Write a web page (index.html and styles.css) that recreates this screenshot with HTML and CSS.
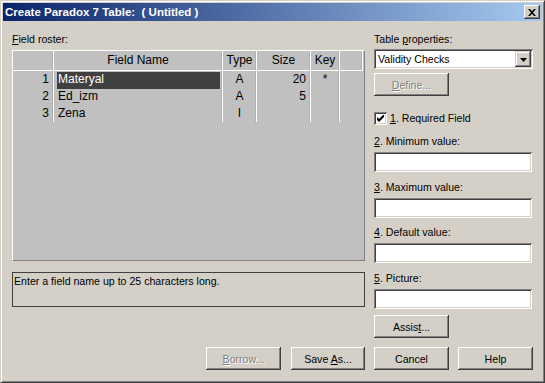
FILE: index.html
```html
<!DOCTYPE html>
<html>
<head>
<meta charset="utf-8">
<link rel="stylesheet" href="styles.css">
</head>
<body>
<div class="window">
  <div class="titlebar">
    <span class="title">Create Paradox 7 Table:  ( Untitled )</span>
    <div class="close"><svg width="8" height="7" viewBox="0 0 8 7"><path d="M0 0h2l2 2.2L6 0h2L5 3.5 8 7H6L4 4.8 2 7H0l3-3.5z" fill="#000"/></svg></div>
  </div>
  <div class="content">
    <div class="left">
      <div class="label"><u>F</u>ield roster:</div>
      <div class="roster">
        <div class="head">
          <div class="hc"></div>
          <div class="hc">Field Name</div>
          <div class="hc">Type</div>
          <div class="hc">Size</div>
          <div class="hc">Key</div>
          <div class="hc"></div>
        </div>
        <div class="row">
          <div class="c num">1</div>
          <div class="c name"><span class="sel">Materyal</span></div>
          <div class="c mid">A</div>
          <div class="c num">20</div>
          <div class="c mid">*</div>
        </div>
        <div class="row">
          <div class="c num">2</div>
          <div class="c name"><span class="txt">Ed_izm</span></div>
          <div class="c mid">A</div>
          <div class="c num">5</div>
          <div class="c mid"></div>
        </div>
        <div class="row">
          <div class="c num">3</div>
          <div class="c name"><span class="txt">Zena</span></div>
          <div class="c mid">I</div>
          <div class="c num"></div>
          <div class="c mid"></div>
        </div>
      </div>
      <div class="status">Enter a field name up to 25 characters long.</div>
    </div>
    <div class="right">
      <div class="label">Table <u>p</u>roperties:</div>
      <div class="select">
        <span class="sel-text">Validity Checks</span>
        <span class="arrow"><svg width="7" height="4" viewBox="0 0 7 4"><path d="M0 0h7L3.5 4z" fill="#000"/></svg></span>
      </div>
      <button class="btn define" disabled><u>D</u>efine...</button>
      <div class="check-row">
        <span class="checkbox"><svg width="7" height="7" viewBox="0 0 7 7"><path d="M0 2l2 2 5-5v3L2 7 0 5z" fill="#000"/></svg></span>
        <span><u>1</u>. Required Field</span>
      </div>
      <div class="field f2"><div class="label"><u>2</u>. Minimum value:</div><input class="input" type="text"></div>
      <div class="field f3"><div class="label"><u>3</u>. Maximum value:</div><input class="input" type="text"></div>
      <div class="field f4"><div class="label"><u>4</u>. Default value:</div><input class="input" type="text"></div>
      <div class="field f5"><div class="label"><u>5</u>. Picture:</div><input class="input" type="text"></div>
      <button class="btn assist">Assis<u>t</u>...</button>
    </div>
    <div class="btns-left">
      <button class="btn" disabled><u>B</u>orrow...</button>
      <button class="btn">Save <u>A</u>s...</button>
    </div>
    <div class="btns-right">
      <button class="btn">Cancel</button>
      <button class="btn">Help</button>
    </div>
  </div>
</div>
</body>
</html>
```

FILE: styles.css
```css
* { box-sizing: border-box; }
body {
  margin: 0;
  font-family: "Liberation Sans", Arial, sans-serif;
  font-size: 10.6px;
  color: #000;
  background: #d4d0c8;
}
.window {
  width: 545px;
  height: 383px;
  background: #d4d0c8;
  border: 1px solid;
  border-color: #d4d0c8 #404040 #404040 #d4d0c8;
  box-shadow: inset 1px 1px #fff, inset -1px -1px #808080;
  padding: 2px;
  display: flex;
  flex-direction: column;
}
.titlebar {
  height: 18px;
  background: linear-gradient(to right, #0a246a, #a6caf0);
  display: flex;
  align-items: center;
  justify-content: space-between;
  padding-left: 2px;
  padding-right: 2px;
}
.title {
  color: #fff;
  font-weight: bold;
  font-size: 11.5px;
  white-space: pre;
  line-height: 18px;
}
.close {
  width: 16px;
  height: 14px;
  background: #d4d0c8;
  box-shadow: inset -1px -1px #404040, inset 1px 1px #fff, inset -2px -2px #808080;
  display: flex;
  align-items: center;
  justify-content: center;
  padding-right: 1px;
}
.close svg { display: block; }
.content {
  padding: 12px 9px 0 9px;
  display: grid;
  grid-template-columns: 353px 159px;
  column-gap: 9px;
  row-gap: 9px;
}
.label {
  line-height: 13px;
  height: 13px;
  white-space: nowrap;
}
.left { display: flex; flex-direction: column; }
.roster {
  margin-top: 4px;
  height: 211px;
  background: #c0c0c0;
  border: 1px solid;
  border-color: #fff #808080 #808080 #fff;
}
.head {
  display: grid;
  grid-template-columns: 41px 169px 34px 54px 29px 23px;
  height: 20px;
}
.hc {
  border-right: 1px solid #fff;
  border-bottom: 1px solid #fff;
  box-shadow: inset -1px 0 #b0b0b0;
  text-align: center;
  line-height: 19px;
  font-size: 12px;
}
.row {
  display: grid;
  grid-template-columns: 41px 169px 34px 54px 29px;
  height: 17px;
}
.c {
  border-right: 1px solid #fff;
  box-shadow: inset -1px 0 #b0b0b0;
  line-height: 17px;
  font-size: 12px;
  white-space: nowrap;
}
.num { text-align: right; padding-right: 4px; }
.mid { text-align: center; }
.name { padding: 1px 2px 0 3px; }
.sel {
  display: block;
  height: 17px;
  line-height: 15px;
  background: #404040;
  color: #fff;
  padding-left: 1px;
}
.txt {
  display: block;
  line-height: 15px;
  padding-left: 1px;
}
.status {
  margin-top: 11px;
  height: 35px;
  border: 1px solid #404040;
  padding: 2px 1px;
  line-height: 13px;
}
.right { display: flex; flex-direction: column; }
.select {
  margin-top: 3px;
  height: 20px;
  width: 159px;
  background: #fff;
  box-shadow: inset 1px 1px #808080, inset -1px -1px #fff, inset 2px 2px #404040, inset -2px -2px #d4d0c8;
  display: flex;
  align-items: center;
  justify-content: space-between;
  padding: 2px;
}
.sel-text { padding-left: 2px; line-height: 16px; }
.arrow {
  width: 16px;
  height: 16px;
  background: #d4d0c8;
  box-shadow: inset -1px -1px #404040, inset 1px 1px #d4d0c8, inset -2px -2px #808080, inset 2px 2px #fff;
  display: flex;
  align-items: center;
  justify-content: center;
  padding-top: 1px;
}
.arrow svg { display: block; }
.btn {
  width: 75px;
  height: 23px;
  background: #d4d0c8;
  border: none;
  box-shadow: inset -1px -1px #404040, inset 1px 1px #fff, inset -2px -2px #808080, inset 2px 2px #d4d0c8;
  font: inherit;
  color: #000;
  padding: 0;
  text-align: center;
}
.btn:disabled {
  color: #808080;
  text-shadow: 1px 1px 0 #fff;
}
.define { margin-top: 4px; }
.check-row {
  margin-top: 15px;
  height: 14px;
  display: flex;
  align-items: center;
  gap: 3px;
}
.checkbox {
  width: 13px;
  height: 13px;
  background: #fff;
  box-shadow: inset 1px 1px #808080, inset -1px -1px #fff, inset 2px 2px #404040, inset -2px -2px #d4d0c8;
  display: flex;
  align-items: center;
  justify-content: center;
}
.checkbox svg { display: block; }
.field { display: flex; flex-direction: column; }
.field .input { margin-top: 4px; }
.f2 { margin-top: 10px; }
.f3 { margin-top: 9px; }
.f4 { margin-top: 8px; }
.f5 { margin-top: 9px; }
.input {
  width: 158px;
  height: 20px;
  border: none;
  background: #fff;
  box-shadow: inset 1px 1px #808080, inset -1px -1px #fff, inset 2px 2px #404040, inset -2px -2px #d4d0c8;
  font: inherit;
  outline: none;
  padding: 0 3px;
}
.assist { margin-top: 6px; }
.btns-left {
  display: flex;
  justify-content: flex-end;
  gap: 10px;
}
.btns-left .btn:last-child { width: 74px; }
.btns-right {
  display: flex;
  gap: 9px;
}
```
